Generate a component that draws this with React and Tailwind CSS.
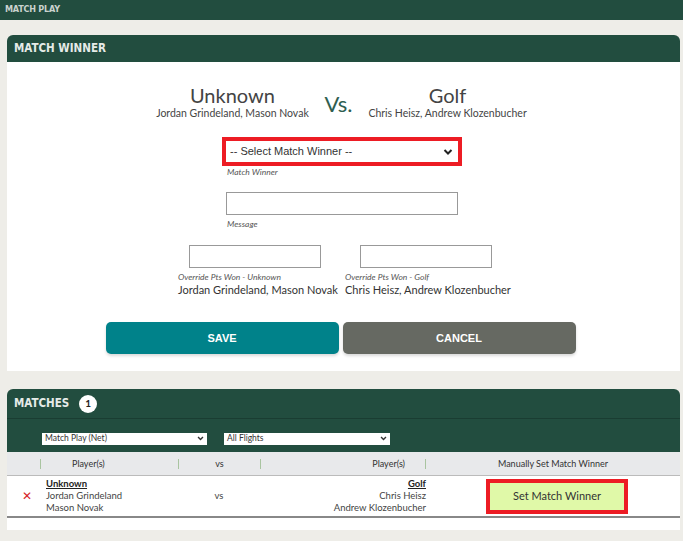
import React from 'react';

const Chevron = ({ className = '' }) => (
  <svg viewBox="0 0 10 10" className={className} fill="none" stroke="currentColor" strokeWidth="2">
    <path d="M1.5 3 L5 6.5 L8.5 3" />
  </svg>
);

const App = () => {
  return (
    <div className="min-h-[541px] bg-[#eeede8] pb-[11px]" style={{ fontFamily: 'Lato, "Noto Sans", sans-serif' }}>
      {/* Top bar */}
      <div className="h-[20px] bg-[#224d3f] flex items-center px-[5px]">
        <span className="text-[9px] font-bold text-[#c9d2ce] tracking-tight" style={{ fontFamily: '"DejaVu Sans Condensed", sans-serif' }}>
          MATCH PLAY
        </span>
      </div>

      {/* Match winner card */}
      <div className="mx-[7px] mt-[15px] mr-[3px]">
        <div className="h-[27px] bg-[#224d3f] rounded-t-[6px] flex items-center px-[7px]">
          <span className="text-[11.5px] font-bold text-[#e6ebe8]" style={{ fontFamily: '"DejaVu Sans Condensed", sans-serif' }}>
            MATCH WINNER
          </span>
        </div>
        <div className="bg-white h-[309px] pt-[21px] flex flex-col items-center">
          <div className="flex items-center gap-[12px] -ml-[4px]">
            <div className="flex flex-col items-center w-[160px]">
              <div className="text-[20px] leading-[24px] text-[#444]">Unknown</div>
              <div className="text-[10.5px] leading-[13px] text-[#444] whitespace-nowrap">Jordan Grindeland, Mason Novak</div>
            </div>
            <div className="text-[22px] text-[#2f5e50] mt-[4px]">Vs.</div>
            <div className="flex flex-col items-center w-[166px]">
              <div className="text-[20px] leading-[24px] text-[#444]">Golf</div>
              <div className="text-[10.5px] leading-[13px] text-[#444] whitespace-nowrap">Chris Heisz, Andrew Klozenbucher</div>
            </div>
          </div>

          <div className="mt-[17px] w-[240px] -ml-[3px]">
            <div className="border-[4px] border-[#ed1c24] h-[29px] bg-white flex items-center justify-between pl-[4px] pr-[5px]">
              <span className="text-[11px] text-[#333]" style={{ fontFamily: '"Liberation Sans", Arial, sans-serif' }}>-- Select Match Winner --</span>
              <Chevron className="w-[10px] h-[10px] text-[#222]" />
            </div>
            <div className="text-[8.5px] leading-[11px] italic text-[#555] mt-[1px] ml-[5px]">Match Winner</div>
          </div>

          <div className="mt-[14px] w-[232px] -ml-[3px]">
            <div className="border border-[#999] h-[23px] bg-white"></div>
            <div className="text-[8.5px] leading-[11px] italic text-[#555] mt-[4px] ml-[1px]">Message</div>
          </div>

          <div className="mt-[15px] flex gap-[7px] -ml-[4px]">
            <div className="flex flex-col w-[161px]">
              <div className="border border-[#999] h-[23px] w-[132px] self-center"></div>
              <div className="text-[8.5px] leading-[11px] italic text-[#555] mt-[4px] ml-[4px]">Override Pts Won - Unknown</div>
              <div className="text-[11px] leading-[14px] text-[#333] whitespace-nowrap ml-[4px]">Jordan Grindeland, Mason Novak</div>
            </div>
            <div className="flex flex-col w-[167px]">
              <div className="border border-[#999] h-[23px] w-[132px] self-center"></div>
              <div className="text-[8.5px] leading-[11px] italic text-[#555] mt-[4px] ml-[3px]">Override Pts Won - Golf</div>
              <div className="text-[11px] leading-[14px] text-[#333] whitespace-nowrap ml-[3px]">Chris Heisz, Andrew Klozenbucher</div>
            </div>
          </div>

          <div className="mt-[25px] flex gap-[4px] -ml-[6px]" style={{ fontFamily: '"Liberation Sans", Arial, sans-serif' }}>
            <button className="w-[233px] h-[32px] rounded-[5px] bg-[#00828a] text-white text-[11px] font-bold shadow-[0_2px_3px_rgba(0,0,0,0.15)]">SAVE</button>
            <button className="w-[233px] h-[32px] rounded-[5px] bg-[#666962] text-white text-[11px] font-bold shadow-[0_2px_3px_rgba(0,0,0,0.15)]">CANCEL</button>
          </div>
        </div>
      </div>

      {/* Matches card */}
      <div className="mx-[7px] mr-[3px] mt-[18px]">
        <div className="bg-[#224d3f] rounded-t-[6px]">
          <div className="h-[30px] flex items-center px-[7px] border-b border-[#1a3d32]">
            <span className="text-[11.5px] font-bold text-[#e6ebe8]" style={{ fontFamily: '"DejaVu Sans Condensed", sans-serif' }}>
              MATCHES
            </span>
            <span className="ml-[10px] w-[18px] h-[18px] rounded-full bg-white text-[#222] text-[10px] font-bold flex items-center justify-center">1</span>
          </div>
          <div className="h-[33px] flex items-center gap-[17px] pl-[35px] pt-[6px]">
            <div className="w-[165px] h-[12px] bg-white flex items-center justify-between px-[3px]">
              <span className="text-[8.5px] text-[#333]">Match Play (Net)</span>
              <Chevron className="w-[7px] h-[7px] text-[#333]" />
            </div>
            <div className="w-[166px] h-[12px] bg-white flex items-center justify-between px-[3px]">
              <span className="text-[8.5px] text-[#333]">All Flights</span>
              <Chevron className="w-[7px] h-[7px] text-[#333]" />
            </div>
          </div>
        </div>
        <div className="bg-white pb-[12px]">
          <div className="h-[24px] bg-[#e8e9eb] border-b border-[#bbb] flex items-center text-[9px] text-[#333]">
            <div className="w-[33px]"></div>
            <div className="w-[138px] h-[10px] border-l border-[#a9c4a0] pl-[31px] flex items-center">Player(s)</div>
            <div className="w-[82px] h-[10px] border-l border-[#a9c4a0] flex items-center justify-center">vs</div>
            <div className="w-[166px] h-[10px] border-l border-[#a9c4a0] border-r pr-[20px] flex items-center justify-end">Player(s)</div>
            <div className="flex-1 flex items-center justify-center">Manually Set Match Winner</div>
          </div>
          <div className="h-[42px] border-b-2 border-[#888] flex items-center text-[9.5px] text-[#444]">
            <div className="w-[39px] flex justify-center text-[#d61f26] text-[12px]">✕</div>
            <div className="w-[132px] leading-[12px]">
              <div className="font-bold underline text-[#222]">Unknown</div>
              <div>Jordan Grindeland</div>
              <div>Mason Novak</div>
            </div>
            <div className="w-[82px] text-center">vs</div>
            <div className="w-[166px] text-right leading-[12px]">
              <div className="font-bold underline text-[#222]">Golf</div>
              <div>Chris Heisz</div>
              <div>Andrew Klozenbucher</div>
            </div>
            <div className="flex-1 flex justify-center">
              <div className="border-[4px] border-[#ed1c24] w-[142px] h-[35px] bg-[#e0f9a8] flex items-center justify-center text-[11px] text-[#333] ml-[8px]">
                Set Match Winner
              </div>
            </div>
          </div>
        </div>
      </div>
    </div>
  );
};

export default App;
